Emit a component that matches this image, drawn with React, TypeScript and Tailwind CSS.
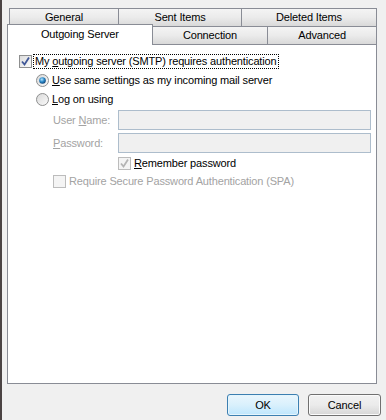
import React from "react";

const Tab = ({ label, w, selected = false, first = false }: { label: string; w: number; selected?: boolean; first?: boolean }) => (
  <div
    style={{ width: w }}
    className={
      "flex items-center justify-center border border-[#898c95] text-black " +
      (first ? "" : "-ml-px ") +
      (selected
        ? "bg-white border-b-0 h-[21px] -mt-[2px] relative z-10 pb-[2px]"
        : "h-[19px] bg-gradient-to-b from-[#f4f4f4] via-[#ebebeb] to-[#d9d9d9]")
    }
  >
    {label}
  </div>
);

const Check = ({ disabled = false, checked = false }: { disabled?: boolean; checked?: boolean }) => (
  <div
    className={
      "w-[13px] h-[13px] shrink-0 border flex items-center justify-center " +
      (disabled ? "border-[#bcbcbc] bg-[#f4f4f4]" : "border-[#8e8f8f] bg-gradient-to-br from-[#dcdcdc] to-[#fbfbfb]")
    }
  >
    {checked && (
      <svg width="11" height="11" viewBox="0 0 11 11">
        <path
          d="M2 5.5 L4.5 8.5 L9 1.5"
          fill="none"
          stroke={disabled ? "#b4b4b4" : "#3f5797"}
          strokeWidth="1.8"
        />
      </svg>
    )}
  </div>
);

const Radio = ({ selected = false }: { selected?: boolean }) => (
  <svg width="13" height="13" viewBox="0 0 13 13" className="shrink-0">
    <defs>
      <linearGradient id="rg" x1="0" y1="0" x2="1" y2="1">
        <stop offset="0" stopColor="#d8d8d8" />
        <stop offset="1" stopColor="#fbfbfb" />
      </linearGradient>
      <radialGradient id="rb" cx="0.4" cy="0.35" r="0.7">
        <stop offset="0" stopColor="#b6e4ff" />
        <stop offset="0.5" stopColor="#2c8ac9" />
        <stop offset="1" stopColor="#0a3c70" />
      </radialGradient>
    </defs>
    <circle cx="6.5" cy="6.5" r="6" fill="url(#rg)" stroke="#8e8f8f" strokeWidth="1" />
    {selected && <circle cx="6.5" cy="6.5" r="3.3" fill="url(#rb)" />}
  </svg>
);

export default function App() {
  return (
    <div className="w-[386px] h-[420px] bg-[#f0f0f0] border-l-2 border-[#4b4444] flex flex-col font-['Liberation_Sans',Arial,sans-serif] text-[11px] tracking-[-0.15px] leading-none text-black overflow-hidden">
      <div className="ml-[5px] w-[370px] flex flex-col">
        <div className="flex mt-[8px] ml-[2px]">
          <Tab label="General" w={110} first />
          <Tab label="Sent Items" w={124} />
          <Tab label="Deleted Items" w={136} />
        </div>
        <div className="flex -mt-px items-end">
          <Tab label="Outgoing Server" w={146} selected first />
          <Tab label="Connection" w={117} />
          <Tab label="Advanced" w={110} />
        </div>
        <div className="-mt-px border border-[#898c95] bg-white h-[340px] flex flex-col pl-[11px] pt-[10px]">
          <div className="flex items-center h-[13px]">
            <Check checked />
            <span className="ml-px border border-dotted border-black px-px py-[1px]">
              My <u>o</u>utgoing server (SMTP) requires authentication
            </span>
          </div>
          <div className="flex items-center h-[13px] mt-[6px] ml-[17px]">
            <Radio selected />
            <span className="ml-[3px]">
              <u>U</u>se same settings as my incoming mail server
            </span>
          </div>
          <div className="flex items-center h-[13px] mt-[6px] ml-[17px]">
            <Radio />
            <span className="ml-[3px]">
              <u>L</u>og on using
            </span>
          </div>
          <div className="flex items-center mt-[4px] ml-[34px] text-[#a3a3a3]">
            <span className="w-[65px]">
              User <u>N</u>ame:
            </span>
            <div className="w-[253px] h-[20px] bg-[#f0f0f0] border border-[#adbdcc]" />
          </div>
          <div className="flex items-center mt-[3px] ml-[34px] text-[#a3a3a3]">
            <span className="w-[65px]">
              <u>P</u>assword:
            </span>
            <div className="w-[253px] h-[20px] bg-[#f0f0f0] border border-[#adbdcc]" />
          </div>
          <div className="flex items-center h-[13px] mt-[4px] ml-[99px]">
            <Check checked disabled />
            <span className="ml-[3px] text-black">
              <u>R</u>emember password
            </span>
          </div>
          <div className="flex items-center h-[13px] mt-[5px] ml-[34px]">
            <Check disabled />
            <span className="ml-[3px] text-[#a3a3a3]">Require Secure Password Authentication (SPA)</span>
          </div>
        </div>
      </div>
      <div className="flex mt-[10px] ml-[225px] gap-[9px]">
        <button className="w-[72px] h-[22px] rounded-[3px] border border-[#3c7fb1] bg-gradient-to-b from-[#eaf6fd] via-[#d9f0fc] to-[#bee6fd] text-black text-[11px] shadow-[inset_0_0_0_1px_#e4f5fd]">
          OK
        </button>
        <button className="w-[73px] h-[22px] rounded-[3px] border border-[#707070] bg-gradient-to-b from-[#f2f2f2] via-[#ebebeb] to-[#d6d6d6] text-black text-[11px] shadow-[inset_0_0_0_1px_#fbfbfb]">
          Cancel
        </button>
      </div>
    </div>
  );
}
